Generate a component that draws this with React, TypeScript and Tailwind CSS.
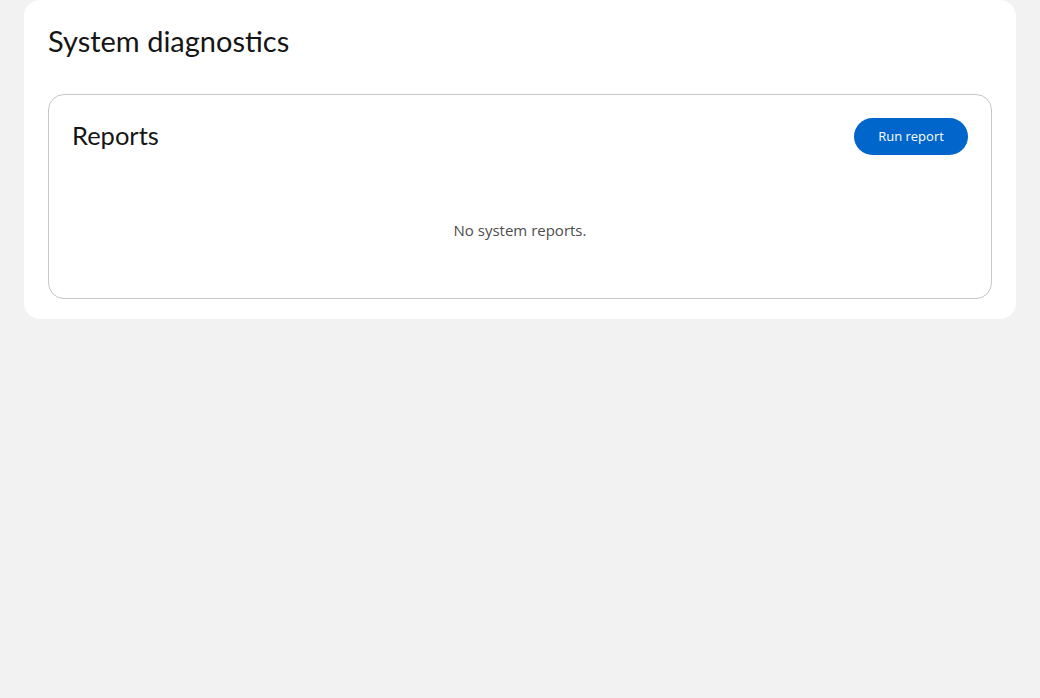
export default function App() {
  return (
    <div className="min-h-[698px] w-[1040px] bg-[#f2f2f2] px-6" style={{ fontFamily: '"Open Sans", "Liberation Sans", sans-serif' }}>
      <div className="rounded-b-2xl rounded-t-2xl bg-white px-6 pb-5 pt-6">
        <h1 className="h-[36px] text-[29px] leading-[34px] text-[#151515]" style={{ fontFamily: 'Lato, "Open Sans", sans-serif' }}>
          System diagnostics
        </h1>
        <div className="mt-[34px] h-[205px] rounded-2xl border border-[#c7c7c7] px-6 pt-[23px]">
          <div className="flex h-[37px] items-center justify-between">
            <h2 className="-ml-px -translate-y-[2px] text-[25.5px] leading-[30px] text-[#151515]" style={{ fontFamily: 'Lato, "Open Sans", sans-serif' }}>Reports</h2>
            <button className="h-[37px] w-[114px] translate-x-px rounded-full bg-[#0066cc] text-[13px] text-white">Run report</button>
          </div>
          <div className="mt-[64px] text-center text-[15px] leading-[22px] text-[#4d4d4d]">No system reports.</div>
        </div>
      </div>
    </div>
  );
}
